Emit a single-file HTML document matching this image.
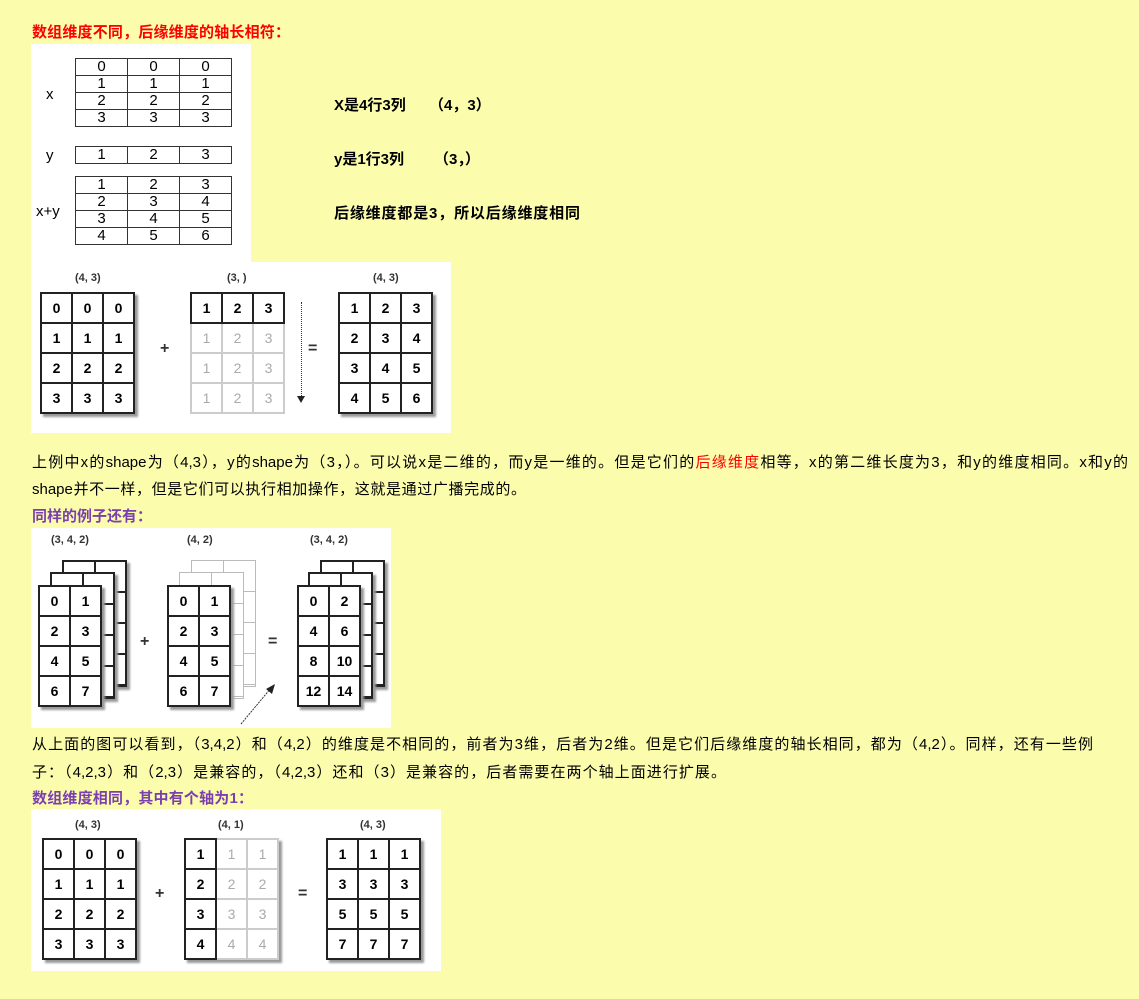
<!DOCTYPE html>
<html><head><meta charset="utf-8"><style>
body{margin:0;background:#fbfdad;width:1139px;height:999px;position:relative;overflow:hidden;font-family:"Liberation Sans","Noto Sans CJK SC",sans-serif;font-size:15px;color:#000}
.a{position:absolute}
.t{position:absolute;white-space:nowrap}
.j{position:absolute;white-space:nowrap;text-align:justify;text-align-last:justify}
.red{color:#f00;font-weight:bold}
.pur{color:#7b3fb0;font-weight:bold}
.b{font-weight:bold}
.img{position:absolute;background:#fff}
table.s{position:absolute;border-collapse:collapse;font-size:15px;font-family:"Liberation Sans",sans-serif}
table.s td{border:1px solid #333;width:51px;height:16px;padding:0;text-align:center;line-height:16px}
table.g{position:absolute;border-collapse:collapse;font-family:"Liberation Sans",sans-serif;font-weight:bold;font-size:14px;background:#fff;box-shadow:3px 3px 2px #999}
table.g td{border:2px solid #222;width:29px;height:28px;padding:0;text-align:center}
table.g td.l{color:#aaa;font-weight:normal;border-color:#ccc}
.lab{position:absolute;font-size:11px;font-weight:bold;color:#333;font-family:"Liberation Sans",sans-serif}
.op{position:absolute;font-size:16px;font-weight:bold;color:#333}
.bk{position:absolute;border:2px solid #222;background:#fff;box-shadow:3px 3px 2px #999;background-image:linear-gradient(90deg,transparent 30px,#222 30px,#222 32px,transparent 32px),repeating-linear-gradient(180deg,transparent 0,transparent 29px,#222 29px,#222 31px)}
.bkl{position:absolute;border:1px solid #bbb;background:#fff;background-image:linear-gradient(90deg,transparent 31px,#bbb 31px,#bbb 32px,transparent 32px),repeating-linear-gradient(180deg,transparent 0,transparent 30px,#bbb 30px,#bbb 31px)}
</style></head><body>
<div class="j red" style="left:32px;top:21px;width:258px">数组维度不同，后缘维度的轴长相符：</div>

<div class="img" style="left:31px;top:44px;width:220px;height:218px"></div>
<div class="t" style="left:46px;top:86px;font-size:15px">x</div>
<div class="t" style="left:46px;top:147px;font-size:15px">y</div>
<div class="t" style="left:36px;top:203px;font-size:15px">x+y</div>
<table class="s" style="left:75px;top:58px"><tr><td>0</td><td>0</td><td>0</td></tr><tr><td>1</td><td>1</td><td>1</td></tr><tr><td>2</td><td>2</td><td>2</td></tr><tr><td>3</td><td>3</td><td>3</td></tr></table>
<table class="s" style="left:75px;top:146px"><tr><td>1</td><td>2</td><td>3</td></tr></table>
<table class="s" style="left:75px;top:176px"><tr><td>1</td><td>2</td><td>3</td></tr><tr><td>2</td><td>3</td><td>4</td></tr><tr><td>3</td><td>4</td><td>5</td></tr><tr><td>4</td><td>5</td><td>6</td></tr></table>

<div class="t b" style="left:334px;top:94px">X是4行3列<span style="position:absolute;left:95px">（4，3）</span></div>
<div class="t b" style="left:334px;top:148px">y是1行3列<span style="position:absolute;left:100px">（3，）</span></div>
<div class="j b" style="left:334px;top:202px;width:246px">后缘维度都是3，所以后缘维度相同</div>

<div class="img" style="left:31px;top:262px;width:420px;height:171px"></div>
<div class="lab" style="left:75px;top:272px">(4, 3)</div>
<div class="lab" style="left:227px;top:272px">(3, )</div>
<div class="lab" style="left:373px;top:272px">(4, 3)</div>
<table class="g" style="left:40px;top:292px"><tr><td>0</td><td>0</td><td>0</td></tr><tr><td>1</td><td>1</td><td>1</td></tr><tr><td>2</td><td>2</td><td>2</td></tr><tr><td>3</td><td>3</td><td>3</td></tr></table>
<table class="g" style="left:190px;top:292px;box-shadow:none"><tr><td>1</td><td>2</td><td>3</td></tr><tr><td class="l">1</td><td class="l">2</td><td class="l">3</td></tr><tr><td class="l">1</td><td class="l">2</td><td class="l">3</td></tr><tr><td class="l">1</td><td class="l">2</td><td class="l">3</td></tr></table>
<table class="g" style="left:338px;top:292px"><tr><td>1</td><td>2</td><td>3</td></tr><tr><td>2</td><td>3</td><td>4</td></tr><tr><td>3</td><td>4</td><td>5</td></tr><tr><td>4</td><td>5</td><td>6</td></tr></table>
<div class="op" style="left:160px;top:340px">+</div>
<div class="op" style="left:308px;top:340px">=</div>
<div class="a" style="left:301px;top:302px;height:94px;border-left:1px dotted #333"></div>
<div class="a" style="left:297px;top:396px;width:0;height:0;border-left:4px solid transparent;border-right:4px solid transparent;border-top:7px solid #222"></div>

<div class="j" style="left:32px;top:451px;width:1096px">上例中x的shape为（4,3），y的shape为（3，）。可以说x是二维的，而y是一维的。但是它们的<span style="color:#f00">后缘维度</span>相等，x的第二维长度为3，和y的维度相同。x和y的</div>
<div class="j" style="left:32px;top:478px;width:494px">shape并不一样，但是它们可以执行相加操作，这就是通过广播完成的。</div>
<div class="j pur" style="left:32px;top:505px;width:116px">同样的例子还有：</div>

<div class="img" style="left:31px;top:528px;width:360px;height:200px"></div>
<div class="lab" style="left:51px;top:534px">(3, 4, 2)</div>
<div class="lab" style="left:187px;top:534px">(4, 2)</div>
<div class="lab" style="left:310px;top:534px">(3, 4, 2)</div>
<div class="bk" style="left:62px;top:560px;width:61px;height:123px"></div>
<div class="bk" style="left:50px;top:572px;width:61px;height:123px"></div>
<div class="bkl" style="left:191px;top:560px;width:63px;height:125px"></div>
<div class="bkl" style="left:179px;top:572px;width:63px;height:125px"></div>
<div class="bk" style="left:320px;top:560px;width:61px;height:123px"></div>
<div class="bk" style="left:308px;top:572px;width:61px;height:123px"></div>
<table class="g" style="left:38px;top:585px"><tr><td>0</td><td>1</td></tr><tr><td>2</td><td>3</td></tr><tr><td>4</td><td>5</td></tr><tr><td>6</td><td>7</td></tr></table>
<table class="g" style="left:167px;top:585px"><tr><td>0</td><td>1</td></tr><tr><td>2</td><td>3</td></tr><tr><td>4</td><td>5</td></tr><tr><td>6</td><td>7</td></tr></table>
<table class="g" style="left:297px;top:585px"><tr><td>0</td><td>2</td></tr><tr><td>4</td><td>6</td></tr><tr><td>8</td><td>10</td></tr><tr><td>12</td><td>14</td></tr></table>
<div class="op" style="left:140px;top:633px">+</div>
<div class="op" style="left:268px;top:633px">=</div>
<svg class="a" style="left:238px;top:682px" width="40" height="44"><line x1="3" y1="42" x2="33" y2="6" stroke="#333" stroke-dasharray="2,1"/><polygon points="37,2 28,7 34,12" fill="#222"/></svg>

<div class="j" style="left:32px;top:733px;width:1061px">从上面的图可以看到，（3,4,2）和（4,2）的维度是不相同的，前者为3维，后者为2维。但是它们后缘维度的轴长相同，都为（4,2）。同样，还有一些例</div>
<div class="j" style="left:32px;top:761px;width:694px">子：（4,2,3）和（2,3）是兼容的，（4,2,3）还和（3）是兼容的，后者需要在两个轴上面进行扩展。</div>
<div class="j pur" style="left:32px;top:787px;width:221px">数组维度相同，其中有个轴为1：</div>

<div class="img" style="left:31px;top:809px;width:410px;height:162px"></div>
<div class="lab" style="left:75px;top:819px">(4, 3)</div>
<div class="lab" style="left:218px;top:819px">(4, 1)</div>
<div class="lab" style="left:360px;top:819px">(4, 3)</div>
<table class="g" style="left:42px;top:838px"><tr><td>0</td><td>0</td><td>0</td></tr><tr><td>1</td><td>1</td><td>1</td></tr><tr><td>2</td><td>2</td><td>2</td></tr><tr><td>3</td><td>3</td><td>3</td></tr></table>
<table class="g" style="left:184px;top:838px"><tr><td>1</td><td class="l">1</td><td class="l">1</td></tr><tr><td>2</td><td class="l">2</td><td class="l">2</td></tr><tr><td>3</td><td class="l">3</td><td class="l">3</td></tr><tr><td>4</td><td class="l">4</td><td class="l">4</td></tr></table>
<table class="g" style="left:326px;top:838px"><tr><td>1</td><td>1</td><td>1</td></tr><tr><td>3</td><td>3</td><td>3</td></tr><tr><td>5</td><td>5</td><td>5</td></tr><tr><td>7</td><td>7</td><td>7</td></tr></table>
<div class="op" style="left:155px;top:885px">+</div>
<div class="op" style="left:298px;top:885px">=</div>
</body></html>
